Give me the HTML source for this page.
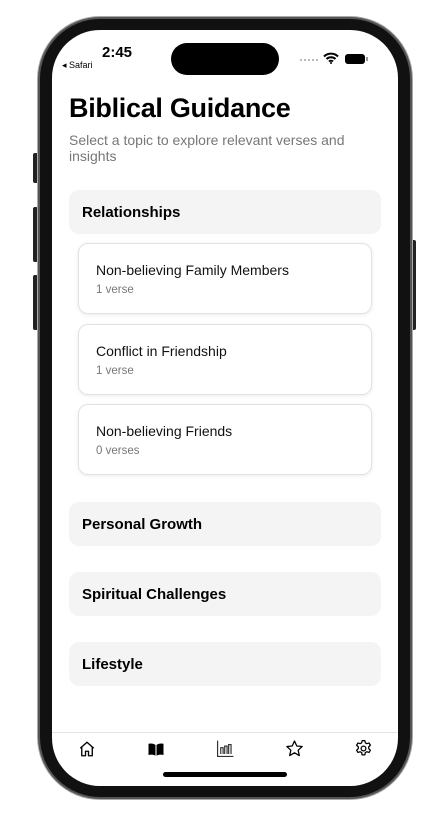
<!DOCTYPE html>
<html><head><style>
*{margin:0;padding:0;box-sizing:border-box}
body{width:442px;height:830px;background:#fff;position:relative;overflow:hidden;font-family:"Liberation Sans",sans-serif}
.btn{position:absolute;background:#222;border-radius:2px}
.phone{position:absolute;left:38px;top:17px;width:374px;height:782px;border-radius:62px;background:#111;border:2px solid #555;box-shadow:0 0 0 1px #aaa}
.screen{position:absolute;left:52px;top:30px;width:346px;height:756px;border-radius:48px;background:#fff;overflow:hidden}
.island{position:absolute;left:119px;top:13px;width:108px;height:32px;border-radius:16px;background:#000}
.time{position:absolute;left:50px;top:14px;font-size:15px;font-weight:bold;color:#000}
.safari{position:absolute;left:10px;top:30px;font-size:9px;color:#000}
h1{position:absolute;left:17px;top:63px;font-size:27px;font-weight:bold;color:#000;letter-spacing:-0.3px}
.sub{position:absolute;left:17px;top:102px;width:300px;font-size:14px;line-height:16px;color:#777}
.sec{position:absolute;left:17px;width:312px;height:44px;background:#f4f4f4;border-radius:10px;padding-left:13px;font-size:15px;font-weight:bold;line-height:46px;color:#000}
.card{position:absolute;left:26px;width:294px;height:71px;background:#fff;border:1px solid #e2e2e2;border-radius:10px;box-shadow:0 1px 4px rgba(0,0,0,.08);padding:18px 0 0 17px}
.card .t{font-size:14px;color:#111}
.card .c{font-size:11.5px;color:#777;margin-top:6px}
.tab{position:absolute;left:0;top:702px;width:346px;border-top:1px solid #e4e4e4;height:54px}
.home{position:absolute;left:111px;top:742px;width:124px;height:5px;border-radius:3px;background:#000}
svg{position:absolute}
</style></head><body>
<div class="btn" style="left:33px;top:153px;width:5px;height:30px"></div>
<div class="btn" style="left:33px;top:207px;width:5px;height:55px"></div>
<div class="btn" style="left:33px;top:275px;width:5px;height:55px"></div>
<div class="btn" style="left:411px;top:240px;width:5px;height:90px"></div>
<div class="phone"></div>
<div class="screen">
<div class="island"></div>
<div class="time">2:45</div>
<div class="safari">◂ Safari</div>
<div style="position:absolute;left:248px;top:29px;width:18px;border-top:2px dotted #bbb"></div>
<svg style="left:271px;top:22px" width="16" height="12" viewBox="0 0 16 12"><path d="M1 4.5a10 10 0 0 1 14 0M3.5 7a6.5 6.5 0 0 1 9 0M6 9.5a3 3 0 0 1 4 0" stroke="#000" stroke-width="2" fill="none"/><circle cx="8" cy="11" r="1" fill="#000"/></svg>
<div style="position:absolute;left:293px;top:24px;width:20px;height:10px;border-radius:3px;background:#000"></div>
<div style="position:absolute;left:314px;top:27px;width:2px;height:4px;background:#999"></div>
<h1>Biblical Guidance</h1>
<div class="sub">Select a topic to explore relevant verses and insights</div>
<div class="sec" style="top:160px">Relationships</div>
<div class="card" style="top:213px"><div class="t">Non-believing Family Members</div><div class="c">1 verse</div></div>
<div class="card" style="top:294px"><div class="t">Conflict in Friendship</div><div class="c">1 verse</div></div>
<div class="card" style="top:374px"><div class="t">Non-believing Friends</div><div class="c">0 verses</div></div>
<div class="sec" style="top:472px">Personal Growth</div>
<div class="sec" style="top:542px">Spiritual Challenges</div>
<div class="sec" style="top:612px">Lifestyle</div>
<div class="tab"></div>
<svg style="left:26px;top:710px" width="18" height="18" viewBox="0 0 24 24"><path d="M3 11L12 3l9 8M5 9.5V21h5v-6h4v6h5V9.5" stroke="#000" stroke-width="1.8" fill="none" stroke-linejoin="round"/></svg>
<svg style="left:95px;top:710px" width="18" height="18" viewBox="0 0 24 24"><path d="M2 5c4-1 7 0 9.3 1.5V21C9 19.5 6 19 2 20zM22 5c-4-1-7 0-9.3 1.5V21C15 19.5 18 19 22 20z" fill="#000"/></svg>
<svg style="left:164px;top:709px" width="19" height="19" viewBox="0 0 24 24"><path d="M2 2v20h20M6 19V11h3v8M11 19V9h3v10M16 19V7h3v12" stroke="#333" stroke-width="1.5" fill="none"/></svg>
<svg style="left:233px;top:709px" width="19" height="19" viewBox="0 0 24 24"><path d="M12 2.5l2.9 6.3 6.8.7-5.1 4.6 1.5 6.8L12 17.4l-6.1 3.5 1.5-6.8L2.3 9.5l6.8-.7z" stroke="#000" stroke-width="1.6" fill="none" stroke-linejoin="round"/></svg>
<svg style="left:302px;top:709px" width="19" height="19" viewBox="0 0 24 24"><path d="M10.3 2h3.4l.6 2.8 2 1.1 2.7-.9 1.7 2.9-2.1 1.9v2.4l2.1 1.9-1.7 2.9-2.7-.9-2 1.1-.6 2.8h-3.4l-.6-2.8-2-1.1-2.7.9-1.7-2.9 2.1-1.9v-2.4L3.3 7.9 5 5l2.7.9 2-1.1z" stroke="#000" stroke-width="1.6" fill="none" stroke-linejoin="round"/><circle cx="12" cy="12" r="3" stroke="#000" stroke-width="1.6" fill="none"/></svg>
<div class="home"></div>
</div>
</body></html>
